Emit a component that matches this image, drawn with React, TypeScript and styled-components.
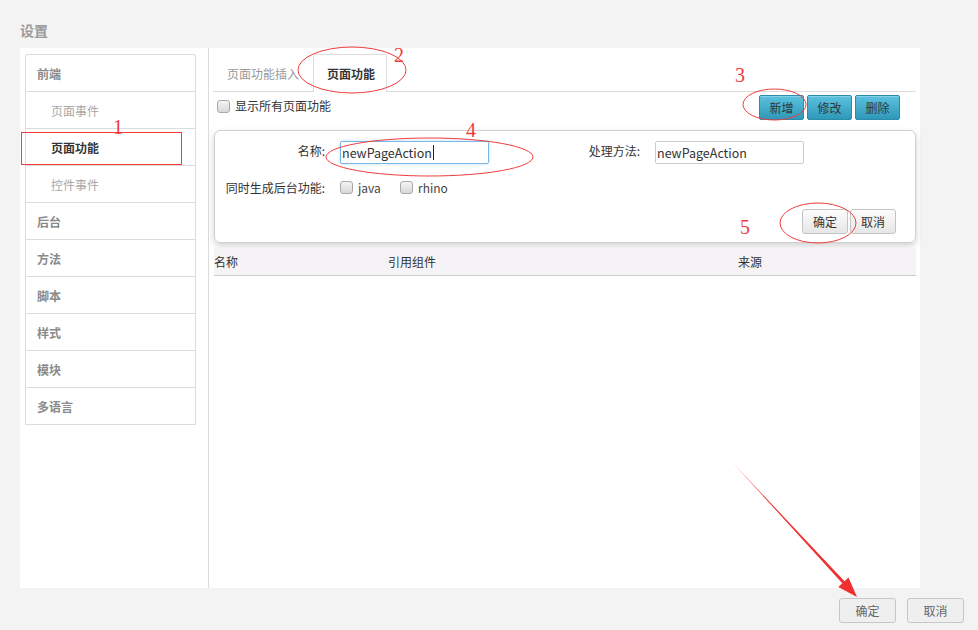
import React from "react";
import styled, { createGlobalStyle } from "styled-components";

const Global = createGlobalStyle`
  html, body { margin: 0; padding: 0; background: #f3f3f3; }
  body { font-family: "Noto Sans CJK SC", "Noto Sans", sans-serif; font-size: 12px; color: #333; }
  * { box-sizing: border-box; }
`;

const Page = styled.div`
  position: relative;
  width: 978px;
  height: 630px;
  overflow: hidden;
  background: #f3f3f3;
`;

const Title = styled.div`
  height: 48px;
  padding: 20px 0 0 20px;
  font-size: 14px;
  line-height: 20px;
  font-weight: bold;
  color: #9a9a9a;
`;

const Panel = styled.div`
  margin-left: 20px;
  width: 900px;
  height: 540px;
  background: #fff;
  display: flex;
`;

const Sidebar = styled.div`
  width: 189px;
  border-right: 1px solid #dcdcdc;
  padding: 6px 0 0 5px;
`;

const NavList = styled.div`
  width: 171px;
  border: 1px solid #dcdcdc;
  border-bottom: none;
  border-radius: 3px 3px 0 0;
  display: flex;
  flex-direction: column;
`;

const NavItem = styled.div<{ $sub?: boolean; $active?: boolean }>`
  height: 37px;
  border-bottom: 1px solid #dcdcdc;
  display: flex;
  align-items: center;
  padding-left: ${(p) => (p.$sub ? 25 : 11)}px;
  font-size: 12px;
  font-weight: ${(p) => (p.$sub && !p.$active ? "normal" : "bold")};
  color: ${(p) => (p.$active ? "#333" : p.$sub ? "#a8a8a8" : "#8a8a8a")};
`;

const Main = styled.div`
  flex: 1;
  padding: 6px 4px 0 4px;
  display: flex;
  flex-direction: column;
`;

const TabBar = styled.div`
  display: flex;
  align-items: flex-end;
  height: 38px;
  border-bottom: 1px solid #dcdcdc;
`;

const Tab = styled.div<{ $active?: boolean }>`
  height: ${(p) => (p.$active ? 38 : 37)}px;
  padding: 0 ${(p) => (p.$active ? 11 : 13)}px 0 13px;
  display: flex;
  align-items: center;
  font-size: 12px;
  font-weight: ${(p) => (p.$active ? "bold" : "normal")};
  color: ${(p) => (p.$active ? "#333" : "#999")};
  background: #fff;
  border: 1px solid ${(p) => (p.$active ? "#dcdcdc" : "transparent")};
  border-bottom: none;
  margin-bottom: ${(p) => (p.$active ? -1 : 0)}px;
  border-radius: 2px 2px 0 0;
`;

const ToolRow = styled.div`
  display: flex;
  align-items: flex-start;
  justify-content: space-between;
  height: 38px;
  padding: 3px 16px 0 4px;
`;

const CheckLabel = styled.label`
  display: flex;
  align-items: center;
  gap: 5px;
  margin-top: 3px;
  font-size: 12px;
  color: #333;
  line-height: 16px;
`;

const Box = styled.span`
  display: inline-block;
  width: 13px;
  height: 13px;
  border: 1px solid #a9a9a9;
  border-radius: 3px;
  background: linear-gradient(#f4f4f4, #d8d8d8);
`;

const ToolButtons = styled.div`
  display: flex;
  gap: 3px;
`;

const InfoButton = styled.button`
  width: 45px;
  height: 25px;
  padding: 0;
  border: 1px solid #2a8bab;
  border-radius: 2px;
  background: linear-gradient(#5cc1df, #2f98b8);
  color: #2b3a40;
  font-family: inherit;
  font-size: 12px;
  line-height: 23px;
  box-shadow: inset 0 1px 0 rgba(255, 255, 255, 0.25);
`;

const Card = styled.div`
  margin-left: 1px;
  border: 1px solid #cfcfcf;
  border-radius: 6px;
  box-shadow: 0 3px 7px rgba(0, 0, 0, 0.18);
  padding: 10px 19px 8px 0;
  display: flex;
  flex-direction: column;
`;

const FormRow = styled.div<{ $top?: number }>`
  display: flex;
  align-items: center;
  height: 23px;
  margin-top: ${(p) => p.$top ?? 0}px;
`;

const Label = styled.div<{ $w: number; $center?: boolean }>`
  width: ${(p) => p.$w}px;
  text-align: right;
  padding-right: 15px;
  font-size: 12px;
  color: #333;
  align-self: ${(p) => (p.$center ? "center" : "flex-start")};
  line-height: 20px;
`;

const Field = styled.div<{ $focused?: boolean }>`
  width: 149px;
  height: 23px;
  border: 1px solid ${(p) => (p.$focused ? "#7ab8e8" : "#cccccc")};
  border-radius: 2px;
  box-shadow: ${(p) => (p.$focused ? "0 0 3px rgba(102,175,233,0.5)" : "none")};
  padding: 0 1px;
  display: flex;
  align-items: center;
  font-size: 12.5px;
  color: #333;
`;

const Caret = styled.span`
  display: inline-block;
  width: 1px;
  height: 15px;
  background: #222;
  margin-left: 1px;
`;

const CheckOpt = styled.label<{ $w: number }>`
  width: ${(p) => p.$w}px;
  display: flex;
  align-items: center;
  gap: 5px;
  font-size: 12px;
  color: #444;
`;

const ActionRow = styled.div`
  display: flex;
  justify-content: flex-end;
  gap: 2px;
  margin-top: 10px;
`;

const GrayButton = styled.button`
  width: 46px;
  height: 25px;
  padding: 0;
  border: 1px solid #c4c4c4;
  border-radius: 3px;
  background: linear-gradient(#fdfdfd, #e6e6e6);
  color: #333;
  font-family: inherit;
  font-size: 12px;
`;

const TableHead = styled.div`
  margin: 5px 0 0 1px;
  height: 28px;
  background: #f6f3f6;
  border-bottom: 1px solid #cccccc;
  display: flex;
  align-items: center;
  font-size: 12px;
  color: #333;
`;

const Col = styled.div<{ $w?: number }>`
  width: ${(p) => (p.$w ? `${p.$w}px` : "auto")};
  flex: ${(p) => (p.$w ? "none" : 1)};
`;

const Footer = styled.div`
  display: flex;
  justify-content: flex-end;
  gap: 11px;
  padding: 10px 14px 0 0;
`;

const FooterButton = styled.button`
  width: 57px;
  height: 25px;
  padding: 0;
  border: 1px solid #c6c6c6;
  border-radius: 3px;
  background: #efefef;
  color: #666;
  font-family: inherit;
  font-size: 12px;
`;

const Overlay = styled.svg`
  position: absolute;
  left: 0;
  top: 0;
  pointer-events: none;
`;

const Num = styled.text`
  font-family: "Liberation Serif", serif;
  font-size: 20px;
  fill: #f03c3c;
`;

const navItems: { label: string; sub?: boolean; active?: boolean }[] = [
  { label: "前端" },
  { label: "页面事件", sub: true },
  { label: "页面功能", sub: true, active: true },
  { label: "控件事件", sub: true },
  { label: "后台" },
  { label: "方法" },
  { label: "脚本" },
  { label: "样式" },
  { label: "模块" },
  { label: "多语言" },
];

export default function App() {
  return (
    <Page>
      <Global />
      <Title>设置</Title>
      <Panel>
        <Sidebar>
          <NavList>
            {navItems.map((n) => (
              <NavItem key={n.label} $sub={n.sub} $active={n.active}>
                {n.label}
              </NavItem>
            ))}
          </NavList>
        </Sidebar>
        <Main>
          <TabBar>
            <Tab>页面功能插入</Tab>
            <Tab $active>页面功能</Tab>
          </TabBar>
          <ToolRow>
            <CheckLabel>
              <Box />
              显示所有页面功能
            </CheckLabel>
            <ToolButtons>
              <InfoButton>新增</InfoButton>
              <InfoButton>修改</InfoButton>
              <InfoButton>删除</InfoButton>
            </ToolButtons>
          </ToolRow>
          <Card>
            <FormRow>
              <Label $w={125}>名称:</Label>
              <Field $focused>
                newPageAction
                <Caret />
              </Field>
              <Label $w={166}>处理方法:</Label>
              <Field>newPageAction</Field>
            </FormRow>
            <FormRow $top={12}>
              <Label $w={125} $center>同时生成后台功能:</Label>
              <CheckOpt $w={60}>
                <Box />
                java
              </CheckOpt>
              <CheckOpt $w={60}>
                <Box />
                rhino
              </CheckOpt>
            </FormRow>
            <ActionRow>
              <GrayButton>确定</GrayButton>
              <GrayButton>取消</GrayButton>
            </ActionRow>
          </Card>
          <TableHead>
            <Col $w={174}>名称</Col>
            <Col $w={350}>引用组件</Col>
            <Col>来源</Col>
          </TableHead>
        </Main>
      </Panel>
      <Footer>
        <FooterButton>确定</FooterButton>
        <FooterButton>取消</FooterButton>
      </Footer>
      <Overlay width={978} height={630} viewBox="0 0 978 630">
        <g fill="none" stroke="#f03c3c" strokeWidth={1}>
          <rect x={21.5} y={132.5} width={160} height={32} />
          <ellipse cx={352} cy={70} rx={54} ry={23} />
          <ellipse cx={774.5} cy={104.5} rx={31.5} ry={15.5} />
          <ellipse cx={429.5} cy={157} rx={103.5} ry={19} />
          <ellipse cx={818} cy={223} rx={38} ry={20} />
        </g>
        <Num x={113} y={134}>1</Num>
        <Num x={394} y={62}>2</Num>
        <Num x={735} y={82}>3</Num>
        <Num x={466} y={137}>4</Num>
        <Num x={740} y={234}>5</Num>
        <polygon
          points="733,463 844.5,581.3 848.5,577.5 857,597 838.3,587.1 842.3,583.3"
          fill="#f03030"
        />
      </Overlay>
    </Page>
  );
}
